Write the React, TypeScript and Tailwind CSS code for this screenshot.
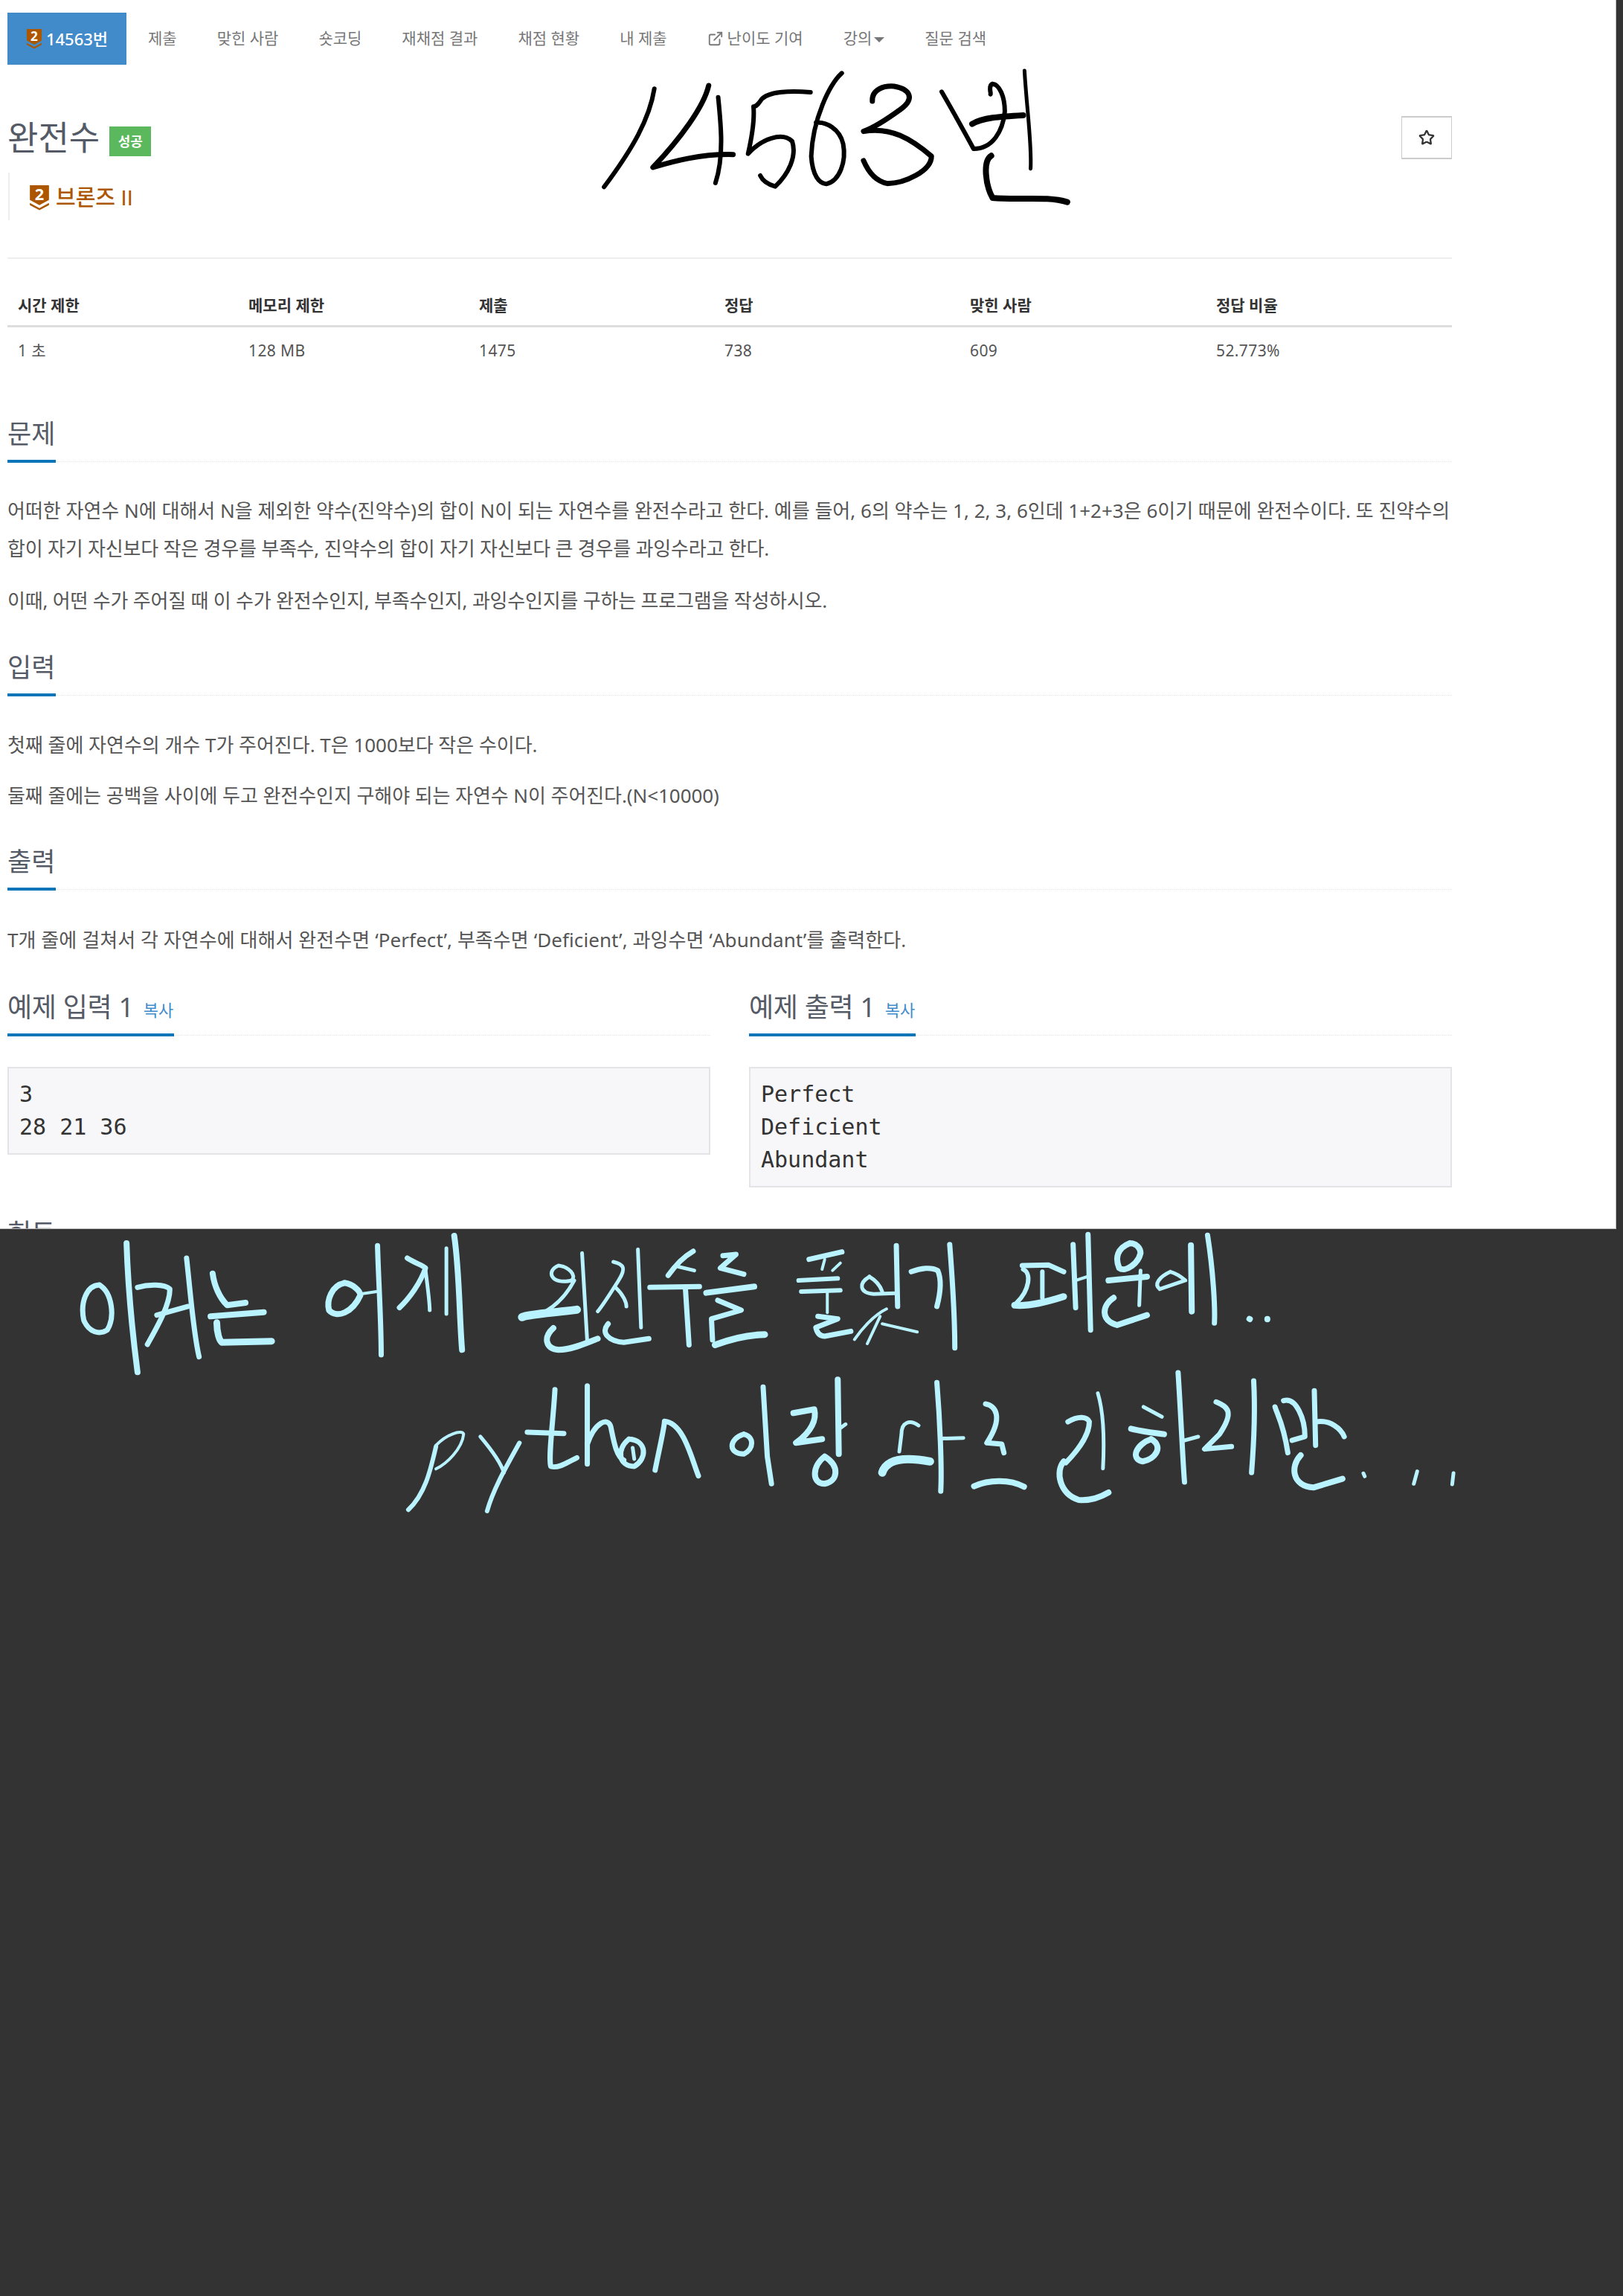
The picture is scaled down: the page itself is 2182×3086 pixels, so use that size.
import { ExternalLink, Star } from 'lucide-react';
import type { ReactNode } from 'react';

const fontSans = "font-['Noto_Sans','Noto_Sans_CJK_KR',sans-serif]";

const navItems = ['제출', '맞힌 사람', '숏코딩', '재채점 결과', '채점 현황', '내 제출'];

const stats = [
  ['시간 제한', '1 초'],
  ['메모리 제한', '128 MB'],
  ['제출', '1475'],
  ['정답', '738'],
  ['맞힌 사람', '609'],
  ['정답 비율', '52.773%'],
];

const RankIcon = ({ size }: { size: number }) => (
  <svg width={size} height={size * 1.2} viewBox="0 0 28 34" className="shrink-0 overflow-visible">
    <path d="M1 0h26v20l-13 7-13-7z" fill="#ad5600" />
    <path d="M1 24l13 7 13-7v3l-13 7-13-7z" fill="#ad5600" />
    <text x="14" y="20" textAnchor="middle" fontSize="22" fontWeight="700" fill="#fff" fontFamily="Noto Sans">
      2
    </text>
  </svg>
);

const Heading = ({ children, className = '' }: { children: ReactNode; className?: string }) => (
  <div className={`h-[68px] border-b border-dotted border-[#e4e4e4] ${className}`}>
    <span className="inline-flex h-[69px] items-center border-b-[4px] border-[#0d76b8] pb-[5px] pr-[1px] text-[35px] text-[#555b66]">
      {children}
    </span>
  </div>
);

const Line = ({ children, className = '' }: { children: ReactNode; className?: string }) => (
  <p className={`whitespace-nowrap text-[26px] leading-[51px] text-[#555] ${className}`}>{children}</p>
);

const Sample = ({ title, lines }: { title: string; lines: string[] }) => (
  <div className="w-[945px]">
    <Heading>
      <span className="text-[36px] tracking-[-0.3px]">{title}</span>
      <span className="ml-[13px] mt-[6px] text-[22px] text-[#428bca]">복사</span>
    </Heading>
    <pre className="mt-[42px] border-2 border-[#e3e3e8] bg-[#f7f7f9] px-[14px] py-[13px] font-['DejaVu_Sans_Mono',monospace] text-[30px] leading-[44px] text-[#333]">
      {lines.join('\n')}
    </pre>
  </div>
);

const Ink = ({ d, w = 4 }: { d: string; w?: number }) => (
  <path d={d} strokeWidth={w} vectorEffect="non-scaling-stroke" />
);

// 위쪽 손글씨
const TitleScribble = () => (
  <svg
    viewBox="0 0 2172 400"
    aria-label="14563번"
    className="pointer-events-none absolute left-0 top-0 h-[400px] w-[2172px]"
    fill="none"
    stroke="#000"
    strokeLinecap="round"
    strokeLinejoin="round"
  >
    <g transform="translate(750 60) scale(0.9132 0.3333)">
      <Ink d="M142 178C135 300 110 420 68 574" w={6} />
      <Ink d="M222 165C215 250 180 380 140 495C170 470 210 440 258 443" w={7} />
      <Ink d="M236 212C240 320 245 450 232 558" w={6} />
      <Ink d="M372 192C340 185 310 190 300 220C295 240 292 250 288 250C290 310 285 380 280 440C300 380 330 350 345 390C352 450 340 520 320 572C305 560 300 540 298 528" w={6} />
      <Ink d="M418 115C400 160 375 300 373 450C375 530 385 560 395 562C415 550 425 470 420 400C415 340 395 310 380 315" w={6} />
      <Ink d="M463 228C462 180 480 165 495 168C520 180 525 220 505 260C490 290 465 335 450 350C490 330 520 380 550 450C550 510 510 560 485 560C465 550 455 500 450 468" w={7} />
      <Ink d="M565 190C580 260 600 360 612 420C640 420 655 350 658 270C658 210 650 160 640 158C633 165 638 195 637 200" w={6} />
      <Ink d="M610 320C625 295 650 290 685 285" w={8} />
      <Ink d="M687 105C690 250 698 400 696 500" w={5} />
      <Ink d="M638 448C625 470 630 570 640 618C680 628 720 610 750 635" w={8} />
    </g>
  </svg>
);

// 아래쪽 손글씨 (왼쪽 절반)
const leftStrokes: [string, number][] = [
  ['M105 258C80 260 68 330 75 400C85 450 105 460 120 440C135 390 130 290 105 258', 7],
  ['M157 90C160 280 170 480 178 610', 8],
  ['M178 268C200 255 230 255 240 275C240 340 215 430 197 498', 7],
  ['M215 380L275 345', 7],
  ['M272 150C280 300 285 450 296 548', 7],
  ['M322 212C325 260 335 310 350 340L385 330', 8],
  ['M318 385L420 368', 8],
  ['M330 410C330 450 335 485 340 490L435 485', 9],
  ['M575 250C550 260 540 320 545 360C560 395 590 370 605 300C605 280 590 255 575 250', 8],
  ['M605 295L636 285', 4],
  ['M638 100C640 250 645 400 645 540', 7],
  ['M695 150C710 170 725 180 730 190C720 250 700 310 680 350', 7],
  ['M730 200C735 280 738 330 738 360', 5],
  ['M770 110L770 375', 5],
  ['M785 60C795 200 795 400 800 520', 8],
  ['M985 180C960 200 970 260 1010 240C1020 220 1005 185 985 180', 5],
  ['M1015 240C1000 300 980 340 960 365', 5],
  ['M915 388C930 375 980 370 1020 358', 11],
  ['M1030 130L1040 490', 5],
  ['M975 432C955 470 960 515 985 520C1010 520 1040 490 1060 475', 8],
  ['M1090 165C1110 175 1115 190 1100 240C1085 290 1070 340 1060 365', 5],
  ['M1095 270C1110 300 1115 330 1115 345', 5],
  ['M1137 115L1143 430', 5],
  ['M1080 415C1065 450 1080 485 1110 490L1158 475', 7],
  ['M1243 122C1220 150 1205 190 1195 220', 7],
  ['M1215 185L1245 200', 5],
  ['M1160 268L1255 265', 7],
  ['M1228 270L1235 500', 7],
  ['M1300 140L1325 135L1295 190L1340 215', 7],
  ['M1268 290L1360 265', 8],
  ['M1290 320L1335 360L1278 395L1280 480', 7],
  ['M1285 500C1310 480 1340 460 1380 458', 9],
  ['M1465 155L1528 125', 7],
  ['M1495 155L1490 195', 4],
  ['M1525 170L1510 200', 4],
  ['M1445 240L1520 232', 6],
  ['M1450 285L1525 280', 6],
  ['M1500 290L1500 370', 4],
  ['M1482 385L1520 395L1478 430C1480 450 1485 465 1495 465L1545 445', 7],
  ['M750 910C740 1000 730 1100 697 1165', 6],
  ['M750 905C770 860 800 840 803 860C800 920 770 980 750 1000', 4],
  ['M835 870C855 920 875 980 880 1015', 5],
  ['M910 895C885 990 860 1080 848 1170', 6],
  ['M978 680C975 800 965 950 970 990C985 1000 1005 970 1020 955', 7],
  ['M925 852L995 857', 7],
  ['M1040 665L1040 980', 7],
  ['M1040 900C1055 810 1080 790 1085 830C1090 880 1095 950 1110 965', 7],
  ['M1120 880C1095 920 1100 990 1130 990C1155 960 1155 885 1120 880', 7],
  ['M1127 915L1130 960', 5],
  ['M1170 1005C1180 900 1188 830 1188 808C1225 815 1240 960 1253 1028', 7],
  ['M1340 860C1310 880 1310 940 1340 940C1360 920 1360 870 1340 860', 7],
  ['M1377 670L1385 950L1393 1060', 7],
  ['M1435 775L1475 760C1480 800 1470 850 1440 895L1490 880', 8],
  ['M1520 640L1522 940', 8],
  ['M1522 840L1535 820', 5],
  ['M1495 950C1470 990 1470 1060 1495 1060C1520 1050 1525 990 1495 950', 8],
];

// 아래쪽 손글씨 (오른쪽 절반)
const rightStrokes: [string, number][] = [
  ['M120 225C95 250 95 290 130 295L178 292', 5],
  ['M120 225C135 240 145 260 150 285', 5],
  ['M183 100L186 345', 7],
  ['M160 355C130 380 100 440 85 478', 4],
  ['M145 385L115 495', 4],
  ['M150 415L232 448', 4],
  ['M218 205C240 190 265 185 280 200C290 240 285 300 278 345', 7],
  ['M308 95C315 250 320 400 320 512', 7],
  ['M478 180L540 178L575 205', 7],
  ['M480 195C500 210 495 280 465 330', 6],
  ['M525 205L525 310', 6],
  ['M460 340C490 345 530 330 575 305', 9],
  ['M597 95L603 350', 7],
  ['M632 55L638 440', 7],
  ['M603 240L630 225', 4],
  ['M730 90C700 110 695 150 705 190C720 210 750 170 755 130C755 110 745 90 730 90', 8],
  ['M680 240L770 225', 8],
  ['M755 200L752 340', 5],
  ['M692 310C665 340 660 400 700 420L770 380', 8],
  ['M825 205C800 225 785 255 800 275L860 240C850 225 835 210 825 205', 5],
  ['M873 98L875 365', 8],
  ['M912 58C925 200 930 350 928 412', 7],
  ['M1010 395L1011 396', 8],
  ['M1052 395L1052 397', 8],
  ['M235 825C215 800 195 810 195 860L190 930', 5],
  ['M150 1015C160 960 200 950 262 970', 11],
  ['M278 652C285 800 290 1000 287 1090', 7],
  ['M285 878L340 875', 5],
  ['M392 738C415 745 435 790 395 895L430 900L435 935', 7],
  ['M365 1070C400 1042 450 1042 482 1072', 8],
  ['M585 810C610 785 630 790 635 810C635 870 600 940 580 975', 7],
  ['M655 695C670 780 670 900 667 998', 5],
  ['M575 970C555 1010 565 1100 610 1125C640 1130 665 1110 680 1095', 8],
  ['M762 750L805 790', 5],
  ['M733 838C760 850 790 855 810 860', 8],
  ['M780 880C745 900 730 960 760 970C790 960 810 910 780 880', 8],
  ['M843 612C850 800 855 1000 858 1053', 7],
  ['M858 885L890 870', 5],
  ['M932 730C960 750 975 770 940 860L905 920L968 910', 7],
  ['M1020 645C1025 800 1018 950 1015 1015', 7],
  ['M1070 750C1075 780 1090 820 1100 935', 7],
  ['M1090 725C1120 710 1140 800 1140 870L1110 885', 7],
  ['M1162 685L1165 905', 7],
  ['M1165 810C1200 800 1225 840 1232 870', 7],
  ['M1130 945C1105 990 1110 1070 1160 1075L1228 1040', 8],
  ['M1277 1018L1280 1030', 5],
  ['M1403 1010L1395 1060', 5],
  ['M1488 1017L1485 1062', 5],
];

const NoteScribble = () => (
  <svg
    viewBox="0 0 2182 500"
    aria-label="이거는 어제 완전수를 풀었기 때문에.. python이랑 사고 긴하지만..."
    className="block h-[500px] w-[2182px]"
    fill="none"
    stroke="#b9f3ff"
    strokeLinecap="round"
    strokeLinejoin="round"
  >
    <g transform="translate(60 -11) scale(0.7015 0.3333)">
      {leftStrokes.map(([d, w]) => (
        <Ink key={d} d={d} w={w} />
      ))}
    </g>
    <g transform="translate(1100 -11) scale(0.574 0.3333)">
      {rightStrokes.map(([d, w]) => (
        <Ink key={d} d={d} w={w} />
      ))}
    </g>
  </svg>
);

export default function App() {
  return (
    <div className={`min-h-[3086px] bg-[#333] ${fontSans}`}>
      <div className="relative h-[1652px] w-[2173px] overflow-hidden border-b border-r border-[#bbb] bg-white">
        <div className="w-[1952px] pl-[10px] pt-[17px]">
          <nav className="flex h-[70px] items-center text-[21px] text-[#777]">
            <div className="mr-[29px] flex h-full w-[160px] items-center justify-center gap-[5px] bg-[#428bca] text-[22px] font-medium text-white">
              <RankIcon size={22} />
              14563번
            </div>
            <div className="flex gap-[54px]">
              {navItems.map((item) => (
                <span key={item}>{item}</span>
              ))}
              <span className="flex items-center gap-[5px]">
                <ExternalLink size={22} strokeWidth={2} />
                난이도 기여
              </span>
              <span className="flex items-center gap-[3px]">
                강의
                <span className="mt-[3px] border-x-[7px] border-t-[7px] border-x-transparent border-t-[#777]" />
              </span>
              <span>질문 검색</span>
            </div>
          </nav>

          <div className="mt-[68px] flex h-[60px] items-center justify-between">
            <div className="flex items-center gap-[13px]">
              <h1 className="text-[45px] leading-[60px] text-[#555b66]">완전수</h1>
              <span className="mt-[10px] flex h-[40px] w-[56px] items-center justify-center bg-[#5cb85c] text-[18px] font-bold text-white">
                성공
              </span>
            </div>
            <button className="flex h-[58px] w-[68px] items-center justify-center border border-[#ccc] border-t-2 border-b-2 bg-white text-[#333]">
              <Star size={22} strokeWidth={2.5} />
            </button>
          </div>

          <div className="ml-[1px] mt-[17px] flex h-[64px] items-center gap-[8px] border-l-2 border-[#eee] pl-[26px] pt-[3px]">
            <RankIcon size={28} />
            <span className="text-[29px] font-medium text-[#ad5600]">
              브론즈 <span className="font-['Liberation_Sans',sans-serif]">II</span>
            </span>
          </div>

          <div className="mt-[50px] border-t-2 border-[#eee]" />

          <div className="mt-[27px] text-[21px]">
            <div className="grid h-[65px] grid-cols-[310px_310px_330px_330px_331px_331px] items-center border-b-[3px] border-[#ddd] pt-[10px] font-bold text-[#333]">
              {stats.map(([label]) => (
                <span key={label} className="pl-[14px]">{label}</span>
              ))}
            </div>
            <div className="grid h-[60px] grid-cols-[310px_310px_330px_330px_331px_331px] items-center pt-[3px] tracking-[0.4px] text-[#555]">
              {stats.map(([label, value]) => (
                <span key={label} className="pl-[14px]">{value}</span>
              ))}
            </div>
          </div>

          <Heading className="mt-[53px]">문제</Heading>
          <Line className="mt-[40px]">
            <span className="tracking-[0px]">
              어떠한 자연수 N에 대해서 N을 제외한 약수(진약수)의 합이 N이 되는 자연수를 완전수라고 한다. 예를 들어, 6의 약수는 1, 2, 3, 6인데 1+2+3은 6이기 때문에 완전수이다. 또 진약수의
            </span>
            <br />
            <span className="tracking-[-0.2px]">합이 자기 자신보다 작은 경우를 부족수, 진약수의 합이 자기 자신보다 큰 경우를 과잉수라고 한다.</span>
          </Line>
          <Line className="mt-[19px] tracking-[-0.2px]">이때, 어떤 수가 주어질 때 이 수가 완전수인지, 부족수인지, 과잉수인지를 구하는 프로그램을 작성하시오.</Line>

          <Heading className="mt-[34px]">입력</Heading>
          <Line className="mt-[41px] tracking-[-0.02px]">첫째 줄에 자연수의 개수 T가 주어진다. T은 1000보다 작은 수이다.</Line>
          <Line className="mt-[17px] tracking-[-0.07px]">둘째 줄에는 공백을 사이에 두고 완전수인지 구해야 되는 자연수 N이 주어진다.(N&lt;10000)</Line>

          <Heading className="mt-[33px]">출력</Heading>
          <Line className="mt-[42px] tracking-[0.07px]">T개 줄에 걸쳐서 각 자연수에 대해서 완전수면 ‘Perfect’, 부족수면 ‘Deficient’, 과잉수면 ‘Abundant’를 출력한다.</Line>

          <div className="mt-[35px] flex items-start justify-between">
            <Sample title="예제 입력 1" lines={['3', '28 21 36']} />
            <Sample title="예제 출력 1" lines={['Perfect', 'Deficient', 'Abundant']} />
          </div>

          <h2 className="mt-[36px] text-[35px] leading-[50px] text-[#555b66]">힌트</h2>
        </div>
        <TitleScribble />
      </div>
      <NoteScribble />
    </div>
  );
}
